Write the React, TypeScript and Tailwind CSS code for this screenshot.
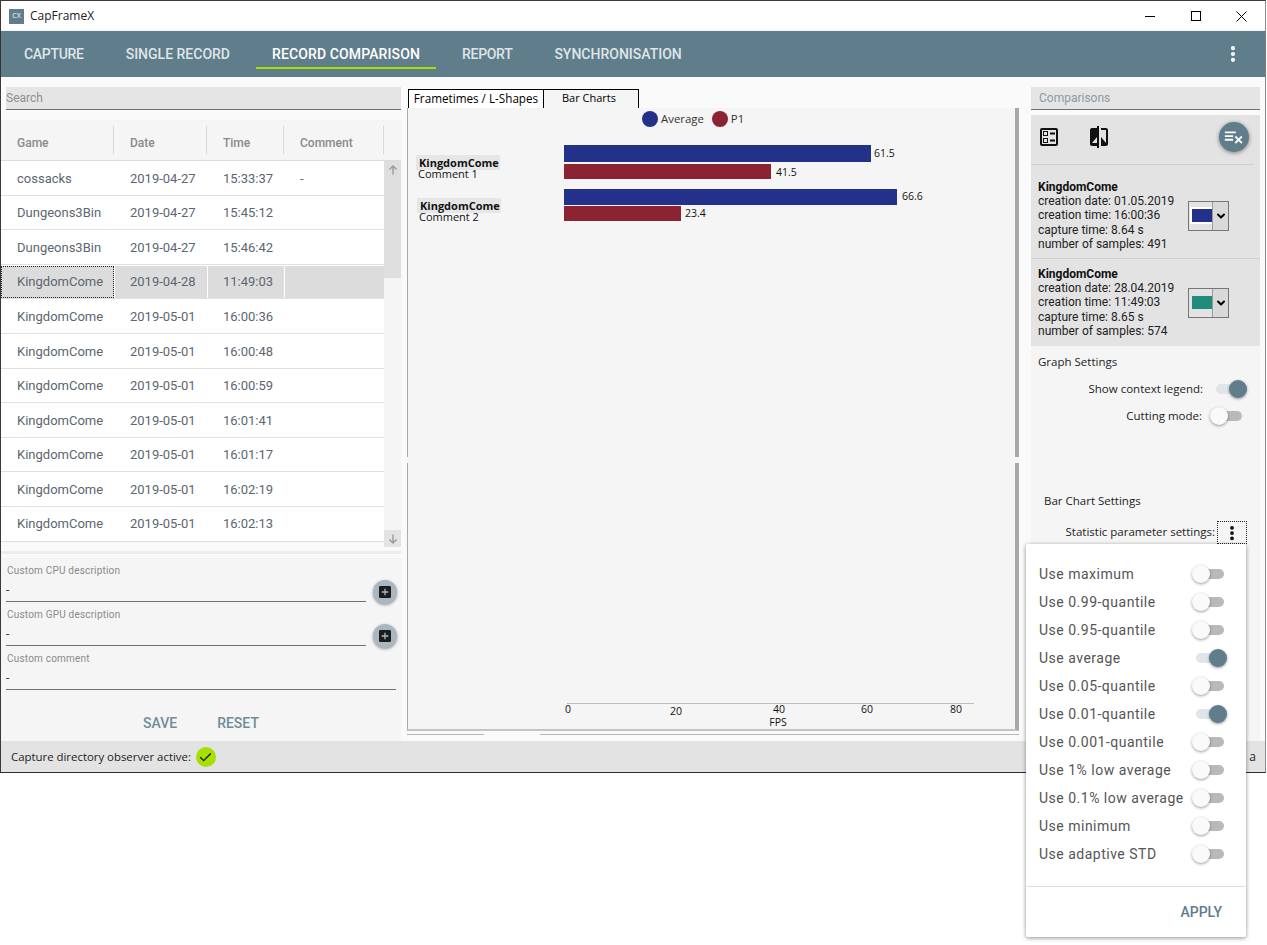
import { Check, ChevronDown, EllipsisVertical } from 'lucide-react'

// Per-item tracking evens out the small width differences of the original font
const NAV_ITEMS = [
  { label: 'CAPTURE', tracking: 'tracking-[-0.3px]' },
  { label: 'SINGLE RECORD', tracking: 'tracking-normal' },
  { label: 'RECORD COMPARISON', tracking: 'tracking-[0.12px]' },
  { label: 'REPORT', tracking: 'tracking-[-0.3px]' },
  { label: 'SYNCHRONISATION', tracking: 'tracking-normal' },
]

const RECORDS = [
  { game: 'cossacks', date: '2019-04-27', time: '15:33:37', comment: '-' },
  { game: 'Dungeons3Bin', date: '2019-04-27', time: '15:45:12', comment: '' },
  { game: 'Dungeons3Bin', date: '2019-04-27', time: '15:46:42', comment: '' },
  { game: 'KingdomCome', date: '2019-04-28', time: '11:49:03', comment: '', selected: true },
  { game: 'KingdomCome', date: '2019-05-01', time: '16:00:36', comment: '' },
  { game: 'KingdomCome', date: '2019-05-01', time: '16:00:48', comment: '' },
  { game: 'KingdomCome', date: '2019-05-01', time: '16:00:59', comment: '' },
  { game: 'KingdomCome', date: '2019-05-01', time: '16:01:41', comment: '' },
  { game: 'KingdomCome', date: '2019-05-01', time: '16:01:17', comment: '' },
  { game: 'KingdomCome', date: '2019-05-01', time: '16:02:19', comment: '' },
  { game: 'KingdomCome', date: '2019-05-01', time: '16:02:13', comment: '' },
]

const COMPARISONS = [
  { date: '01.05.2019', time: '16:00:36', capture: '8.64', samples: 491, swatch: 'bg-[#23318b]', framed: true },
  { date: '28.04.2019', time: '11:49:03', capture: '8.65', samples: 574, swatch: 'bg-[#218b7a]', framed: false },
]

const STATISTICS = [
  { label: 'Use maximum', on: false },
  { label: 'Use 0.99-quantile', on: false },
  { label: 'Use 0.95-quantile', on: false },
  { label: 'Use average', on: true },
  { label: 'Use 0.05-quantile', on: false },
  { label: 'Use 0.01-quantile', on: true },
  { label: 'Use 0.001-quantile', on: false },
  { label: 'Use 1% low average', on: false },
  { label: 'Use 0.1% low average', on: false },
  { label: 'Use minimum', on: false },
  { label: 'Use adaptive STD', on: false },
]

// Chart coordinates are relative to the plot svg, which starts at x=409 y=128
const BARS = [
  { x2: 462, y: 17, h: 17, color: '#23318b', value: '61.5', dx: 3, dy: 3 },
  { x2: 362, y: 36, h: 15, color: '#8b2333', value: '41.5', dx: 5, dy: 4 },
  { x2: 488, y: 61, h: 16, color: '#23318b', value: '66.6', dx: 5, dy: 3 },
  { x2: 272, y: 78, h: 15, color: '#8b2333', value: '23.4', dx: 4, dy: 3 },
]

const TICKS = [
  { x: 159, y: 585, label: '0' },
  { x: 267, y: 587, label: '20' },
  { x: 370, y: 585, label: '40' },
  { x: 458, y: 585, label: '60' },
  { x: 547, y: 585, label: '80' },
]

function Toggle({ on }: { on: boolean }) {
  return (
    <div className="relative h-[18px] w-[36px] shrink-0">
      <div className={`absolute top-1/2 h-[10px] -translate-y-1/2 rounded-full ${on ? 'left-[5px] w-[26px] bg-[#dfe5e8]' : 'left-[6px] w-[27px] bg-[#b9b9b9]'}`} />
      <div
        className={`absolute top-0 h-[18px] w-[18px] rounded-full shadow-[0_1px_3px_rgba(0,0,0,0.4)] ${on ? 'right-0 bg-[#607d8b]' : 'left-px bg-[#fafafa]'}`}
      />
    </div>
  )
}

function PlusButton() {
  return (
    <div className="-mb-[2px] flex h-[24px] w-[24px] items-center justify-center self-end rounded-full bg-[#a9b8c0] shadow-[0_1px_3px_rgba(0,0,0,0.4)]">
      <svg viewBox="0 0 24 24" className="h-[16px] w-[16px] fill-[#1c1c1c]">
        <path d="M17,13H13V17H11V13H7V11H11V7H13V11H17M19,3H5C3.89,3 3,3.89 3,5V19A2,2 0 0,0 5,21H19A2,2 0 0,0 21,19V5C21,3.89 20.1,3 19,3Z" />
      </svg>
    </div>
  )
}

function DescriptionField({ label, width, plus }: { label: string; width: string; plus?: boolean }) {
  return (
    <div className="flex h-[44px] items-center gap-[7px]">
      <div className={`h-[44px] ${width} border-b border-[#707070]`}>
        <div className="pl-px pt-[7px] text-[10px] leading-[12px] tracking-[0.2px] text-[#8a8a8a]">{label}</div>
        <div className="pt-[6px] text-[12px] leading-[14px] text-[#333]">-</div>
      </div>
      {plus && <PlusButton />}
    </div>
  )
}

function ColorPicker({ swatch, framed }: { swatch: string; framed: boolean }) {
  return (
    <div className="flex h-[30px] w-[41px] border border-[#777] bg-[#e3e3e3]">
      <div className="flex w-[23px] items-center justify-end">
        <div className={`h-[13px] w-[20px] ${swatch} ${framed ? 'outline-2 outline-white' : ''}`} />
      </div>
      <div className="flex flex-1 items-center justify-center border-l border-[#999] bg-[#d9d9d9]">
        <ChevronDown className="h-[12px] w-[12px] text-black" strokeWidth={4} />
      </div>
    </div>
  )
}

export default function App() {
  return (
    <div className="relative h-[945px] w-[1267px] overflow-hidden bg-white font-['Roboto',sans-serif]">
      <div className="flex h-[773px] w-[1266px] flex-col border-b border-l border-r border-t border-b-[#22303c] border-l-[#3a3a3a] border-r-[#8c8c8c] border-t-[#3a3a3a]">
        {/* Title bar */}
        <div className="flex h-[30px] items-center bg-white pl-[8px] font-['Open_Sans',sans-serif]">
          <div className="flex h-[15px] w-[15px] items-center justify-center bg-[#607d8b] text-[7px] text-white">CX</div>
          <span className="ml-[6px] text-[12px] text-[#222]">CapFrameX</span>
          <div className="ml-auto flex items-center">
            <div className="flex h-[30px] w-[46px] items-center justify-center">
              <div className="h-px w-[10px] bg-black" />
            </div>
            <div className="flex h-[30px] w-[46px] items-center justify-center">
              <div className="h-[10px] w-[10px] border border-black" />
            </div>
            <div className="flex h-[30px] w-[46px] items-center justify-center pr-px">
              <svg viewBox="0 0 11 11" className="h-[11px] w-[11px] stroke-black">
                <path d="M0.5 0.5 L10.5 10.5 M10.5 0.5 L0.5 10.5" />
              </svg>
            </div>
          </div>
        </div>

        {/* Navigation */}
        <div className="flex h-[46px] items-stretch bg-[#607d8b] pl-[7px] shadow-[0_1px_3px_rgba(0,0,0,0.25)]">
          <div className="flex gap-[10px]">
            {NAV_ITEMS.map((item) => {
              const active = item.label === 'RECORD COMPARISON'
              return (
                <div
                  key={item.label}
                  className={`mb-[8px] mt-[7px] flex h-[31px] items-center border-b-2 px-[16px] pt-[4px] text-[14px] font-medium ${item.tracking} ${active ? 'border-[#a5e000] text-white' : 'border-transparent text-[#dfe5e8]'}`}
                >
                  {item.label}
                </div>
              )
            })}
          </div>
          <div className="ml-auto flex items-center pr-[22px]">
            <EllipsisVertical className="h-[20px] w-[20px] text-white" strokeWidth={3} />
          </div>
        </div>

        {/* Body */}
        <div className="flex h-[664px] bg-[#fafafa]">
          {/* Record list column */}
          <div className="flex w-[400px] shrink-0 flex-col">
            <div className="ml-[5px] mt-[10px] flex h-[23px] w-[395px] items-center border-b border-[#707070] bg-[#e5e5e5] text-[12px] text-[#8f8f8f]">
              Search
            </div>
            <div className="mt-[10px] flex h-[427px] flex-col">
              <div className="flex h-[41px] items-stretch border-b border-[#dcdcdc] bg-[#f5f5f5]">
                {['Game', 'Date', 'Time', 'Comment'].map((title, i) => (
                  <div
                    key={title}
                    className={`my-[6px] flex items-center border-r border-[#d9d9d9] pl-[16px] pt-[6px] text-[12px] font-medium text-[#8a8a8a] ${['w-[113px]', 'w-[93px]', 'w-[77px]', 'w-[100px]'][i]}`}
                  >
                    {title}
                  </div>
                ))}
              </div>
              <div className="flex flex-1">
                <div className="w-[383px] self-start bg-white">
                  {RECORDS.map((r, i) => (
                    <div key={i} className="flex h-[34.6px] border-b border-[#e0e0e0] pt-[1px] text-[13px] text-[#5c6670]">
                      <div className={`flex w-[113px] items-center ${r.selected ? 'border border-dotted border-[#222] bg-[#dcdcdc] pl-[15px]' : 'pl-[16px]'}`}>{r.game}</div>
                      <div className={`ml-px flex w-[92px] items-center pl-[15px] ${r.selected ? 'bg-[#dcdcdc]' : ''}`}>{r.date}</div>
                      <div className={`ml-px flex w-[76px] items-center pl-[15px] ${r.selected ? 'bg-[#dcdcdc]' : ''}`}>{r.time}</div>
                      <div className={`ml-px flex w-[99px] items-center pl-[15px] ${r.selected ? 'bg-[#dcdcdc]' : ''}`}>{r.comment}</div>
                    </div>
                  ))}
                </div>
                <div className="flex w-[17px] flex-col bg-[#f5f5f5]">
                  <div className="flex h-[117px] justify-center bg-[#dedede] pt-[4px]">
                    <svg viewBox="0 0 10 10" className="h-[10px] w-[10px] fill-none stroke-[#999] stroke-[1.4]">
                      <path d="M5 9.5 V1 M1.5 4.5 L5 1 L8.5 4.5" />
                    </svg>
                  </div>
                  <div className="flex-1" />
                  <div className="flex h-[17px] items-center justify-center bg-[#e3e3e3]">
                    <svg viewBox="0 0 10 10" className="h-[10px] w-[10px] fill-none stroke-[#999] stroke-[1.4]">
                      <path d="M5 0.5 V9 M1.5 5.5 L5 9 L8.5 5.5" />
                    </svg>
                  </div>
                </div>
              </div>
            </div>
            <div className="mt-[4px] h-[3px] bg-[#ececec]" />
            <div className="mt-[4px] flex flex-1 flex-col bg-[#f5f5f5] pl-[5px]">
              <DescriptionField label="Custom CPU description" width="w-[360px]" plus />
              <DescriptionField label="Custom GPU description" width="w-[360px]" plus />
              <DescriptionField label="Custom comment" width="w-[390px]" />
              <div className="flex flex-1 items-center gap-[40px] pl-[137px] pt-[16px] text-[14px] font-medium text-[#6f8c9b]">
                <span>SAVE</span>
                <span>RESET</span>
              </div>
            </div>
          </div>

          {/* Chart column */}
          <div className="ml-[6px] flex w-[612px] shrink-0 flex-col pt-[12px]">
            <div className="flex h-[20px] font-['Open_Sans',sans-serif] text-[11.7px] text-black">
              <div className="ml-px flex w-[136px] items-center justify-center border border-black bg-white">Frametimes / L-Shapes</div>
              <div className="flex h-[19px] w-[95px] items-center justify-center border-r border-t border-black bg-[#f5f5f5] pb-[1px] pr-[4px] text-[11px]">Bar Charts</div>
            </div>
            <div className="relative -mt-px flex h-[623px] flex-col border-b-2 border-l border-r-4 border-b-[#c4c4c4] border-l-[#aaaaaa] border-r-[#a8a8a8] bg-[#f5f5f5] pl-px font-['Open_Sans',sans-serif]">
              {/* small breaks in the side borders, where the splitter sits */}
              <div className="absolute -left-px top-[349px] h-[6px] w-px bg-[#f5f5f5]" />
              <div className="absolute -right-[4px] top-[349px] h-[6px] w-[4px] bg-[#f5f5f5]" />
              <div className="flex h-[20px] items-center gap-[2px] pl-[233px] pt-[2px] text-[11.4px] text-[#333]">
                <div className="mr-px h-[16px] w-[16px] rounded-full bg-[#23318b]" />
                <span>Average</span>
                <div className="ml-[6px] mr-px h-[16px] w-[16px] rounded-full bg-[#8b2333]" />
                <span>P1</span>
              </div>
              <svg viewBox="0 0 608 601" className="h-[601px] w-[608px] font-['Open_Sans',sans-serif]">
                <rect x="7" y="27" width="84" height="15" fill="#e6e6e6" />
                <text x="10" y="39" fontSize="11" fontWeight="700" fill="#111">KingdomCome</text>
                <text x="9" y="50" fontSize="11" fill="#111">Comment 1</text>
                <rect x="8" y="70" width="84" height="15" fill="#e6e6e6" />
                <text x="11" y="82" fontSize="11" fontWeight="700" fill="#111">KingdomCome</text>
                <text x="10" y="93" fontSize="11" fill="#111">Comment 2</text>
                {BARS.map((b) => (
                  <g key={b.value}>
                    <rect x="155" y={b.y} width={b.x2 - 155} height={b.h} fill={b.color} />
                    <text x={b.x2 + b.dx} y={b.y + b.h / 2 + b.dy} fontSize="10.5" fill="#111">{b.value}</text>
                  </g>
                ))}
                <line x1="158" y1="575.5" x2="565" y2="575.5" stroke="#bdbdbd" />
                {TICKS.map((t) => (
                  <text key={t.label} x={t.x} y={t.y} fontSize="10.5" textAnchor="middle" fill="#111">{t.label}</text>
                ))}
                <text x="369" y="598" fontSize="10.5" textAnchor="middle" fill="#111">FPS</text>
              </svg>
            </div>
            <div className="mt-[3px] flex h-px">
              <div className="w-[77px] bg-[#b5b5b5]" />
              <div className="ml-[56px] flex-1 bg-[#b5b5b5]" />
            </div>
          </div>

          {/* Comparisons column */}
          <div className="ml-[12px] flex w-[229px] shrink-0 flex-col">
            <div className="mt-[10px] flex h-[23px] items-center border-b border-[#707070] bg-[#e5e5e5] pl-[8px] text-[12px] text-[#8a9aa6]">
              Comparisons
            </div>
            <div className="mt-[5px] bg-[#e3e3e3]">
              <div className="mr-[6px] flex h-[50px] items-center border-b border-[#cfcfcf] pl-[6px]">
                <svg viewBox="0 0 24 24" className="-mt-[6px] h-[24px] w-[24px] fill-[#111]">
                  <path d="M13,7.5H18V9.5H13V7.5M13,14.5H18V16.5H13V14.5M19,3A2,2 0 0,1 21,5V19A2,2 0 0,1 19,21H5A2,2 0 0,1 3,19V5A2,2 0 0,1 5,3H19M19,19V5H5V19H19M11,6V11H6V6H11M10,10V7H7V10H10M11,13V18H6V13H11M10,17V14H7V17H10Z" />
                </svg>
                <svg viewBox="0 0 24 24" className="-mt-[6px] ml-[26px] h-[24px] w-[24px] fill-[#111]">
                  <path d="M10 3H5c-1.1 0-2 .9-2 2v14c0 1.1.9 2 2 2h5v2h2V1h-2v2zm0 15H5l5-6v6zm9-15h-5v2h5v13l-5-6v9h5c1.1 0 2-.9 2-2V5c0-1.1-.9-2-2-2z" />
                </svg>
                <div className="ml-auto mr-[5px] -mt-[6px] flex h-[30px] w-[30px] items-center justify-center rounded-full bg-[#607d8b] shadow-[0_1px_4px_rgba(0,0,0,0.45)]">
                  <svg viewBox="0 0 24 24" className="h-[22px] w-[22px] fill-white">
                    <path d="M2,6V8H14V6H2M2,10V12H11V10H2M14.17,10.76L12.76,12.17L15.59,15L12.76,17.83L14.17,19.24L17,16.41L19.83,19.24L21.24,17.83L18.41,15L21.24,12.17L19.83,10.76L17,13.59L14.17,10.76M2,14V16H11V14H2Z" />
                  </svg>
                </div>
              </div>
              {COMPARISONS.map((c, i) => (
                <div key={c.date} className={`flex items-center pl-[7px] text-[12px] leading-[14.25px] text-[#222] ${i === 0 ? 'h-[94px] border-b border-[#cfcfcf] pt-[8px]' : 'h-[87px]'}`}>
                  <div className="w-[150px]">
                    <div className="font-bold text-[#111]">KingdomCome</div>
                    <div>creation date: {c.date}</div>
                    <div>creation time: {c.time}</div>
                    <div>capture time: {c.capture} s</div>
                    <div>number of samples: {c.samples}</div>
                  </div>
                  <ColorPicker swatch={c.swatch} framed={c.framed} />
                </div>
              ))}
            </div>
            <div className="flex flex-1 flex-col bg-[#f5f5f5] font-['Open_Sans',sans-serif] text-[11.5px] text-[#222]">
              <div className="pl-[7px] pt-[8px] leading-[16px]">Graph Settings</div>
              <div className="mt-[10px] flex h-[18px] items-center justify-end gap-[8px] pr-[13px]">
                <span>Show context legend:</span>
                <Toggle on />
              </div>
              <div className="mt-[9px] flex h-[18px] items-center justify-end gap-[7px] pr-[15px]">
                <span>Cutting mode:</span>
                <Toggle on={false} />
              </div>
              <div className="mt-[68px] pl-[13px] leading-[16px]">Bar Chart Settings</div>
              <div className="mt-[12px] flex h-[23px] items-center justify-end gap-[2px] pr-[13px]">
                <span className="pb-[2px]">Statistic parameter settings:</span>
                <div className="flex h-[23px] w-[30px] items-center justify-center border border-dotted border-[#222]">
                  <EllipsisVertical className="h-[18px] w-[18px] text-black" strokeWidth={3} />
                </div>
              </div>
            </div>
          </div>
        </div>

        {/* Status bar */}
        <div className="flex h-[31px] items-center bg-[#e3e3e3] pl-[10px] pt-px font-['Open_Sans',sans-serif] text-[11.4px] text-[#222]">
          <span>Capture directory observer active:</span>
          <div className="ml-[5px] flex h-[20px] w-[20px] items-center justify-center rounded-full bg-[#a5e000]">
            <Check className="h-[15px] w-[15px] text-[#1a1a1a]" strokeWidth={2.2} />
          </div>
          <span className="ml-auto pr-[9px] text-[12px]">a</span>
        </div>
      </div>

      {/* Statistic parameter popup */}
      <div className="absolute left-[1026px] top-[544px] flex h-[393px] w-[220px] flex-col rounded-[2px] bg-white shadow-[0_1px_4px_rgba(0,0,0,0.45)]">
        <div className="flex flex-col pl-[13px] pr-[19px] pt-[16px]">
          {STATISTICS.map((s) => (
            <div key={s.label} className="flex h-[28px] items-center justify-between text-[14px] tracking-[0.5px] text-[#555]">
              <span>{s.label}</span>
              <Toggle on={s.on} />
            </div>
          ))}
        </div>
        <div className="mt-[18px] border-t border-[#dedede]" />
        <div className="flex flex-1 items-center justify-end pr-[24px] text-[14px] font-medium text-[#607d8b]">APPLY</div>
      </div>
    </div>
  )
}
